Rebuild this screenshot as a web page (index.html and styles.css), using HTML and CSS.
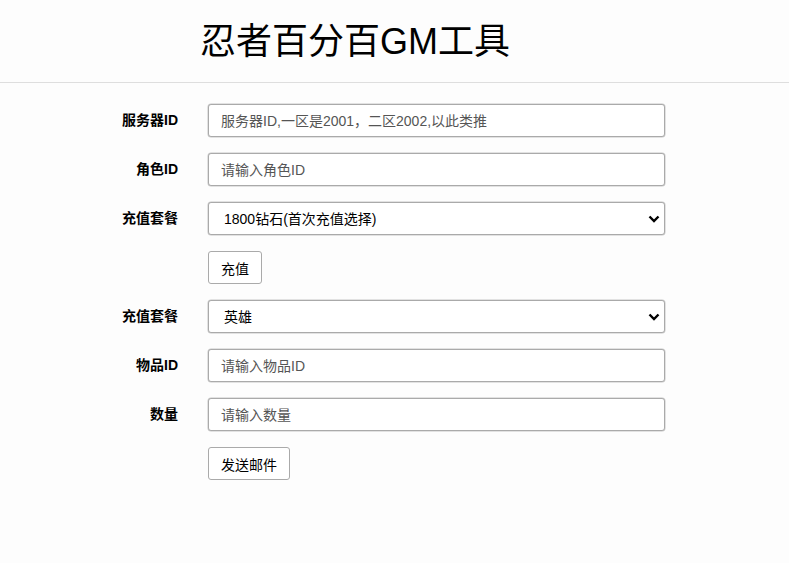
FILE: index.html
```html
<!DOCTYPE html>
<html lang="zh">
<head>
    <meta charset="utf-8" />
    <link rel="stylesheet" href="styles.css">
    <title>忍者百分百GM工具</title>
</head>
<body>
    <div class="header">
        <h1>忍者百分百GM工具</h1>
    </div>
    <div class="form">
        <label class="label" for="server">服务器ID</label>
        <input class="field" id="server" type="text" placeholder="服务器ID,一区是2001，二区2002,以此类推">

        <label class="label" for="role">角色ID</label>
        <input class="field" id="role" type="text" placeholder="请输入角色ID">

        <label class="label" for="pack">充值套餐</label>
        <select class="field select" id="pack">
            <option>1800钻石(首次充值选择)</option>
        </select>

        <span></span>
        <div><button class="btn">充值</button></div>

        <label class="label" for="pack2">充值套餐</label>
        <select class="field select" id="pack2">
            <option>英雄</option>
        </select>

        <label class="label" for="item">物品ID</label>
        <input class="field" id="item" type="text" placeholder="请输入物品ID">

        <label class="label" for="count">数量</label>
        <input class="field" id="count" type="text" placeholder="请输入数量">

        <span></span>
        <div><button class="btn">发送邮件</button></div>
    </div>
</body>
</html>
```

FILE: styles.css
```css
body {
    margin: 0;
    background: #fdfdfd;
    font-family: "Liberation Sans", "Noto Sans CJK SC", sans-serif;
    color: #000;
}

.header {
    height: 83px;
    border-bottom: 1px solid #dedede;
    padding-left: 200px;
    box-sizing: border-box;
}

    .header h1 {
        margin: 0;
        padding-top: 20px;
        font-size: 36px;
        font-weight: normal;
        line-height: 44px;
    }

.form {
    display: grid;
    grid-template-columns: 170px 457px;
    column-gap: 30px;
    row-gap: 16px;
    padding: 21px 0 0 8px;
}

.label {
    text-align: right;
    font-size: 14px;
    font-weight: bold;
    line-height: 33px;
}

.field {
    height: 33px;
    box-sizing: border-box;
    border: 1px solid #aaa;
    box-shadow: 0 0 0 0.5px #c8c8c8;
    border-radius: 3px;
    padding: 0 12px;
    font-family: "Liberation Sans", "Noto Sans CJK SC", sans-serif;
    font-size: 14px;
    background: #fff;
    color: #000;
    outline: none;
}

    .field::placeholder {
        color: #555;
    }

.select {
    -webkit-appearance: none;
    appearance: none;
    padding-left: 15px;
    background: #fff url("data:image/svg+xml;utf8,<svg xmlns='http://www.w3.org/2000/svg' width='12' height='8' viewBox='0 0 12 8'><path d='M1.5 1.5 L6 6 L10.5 1.5' fill='none' stroke='black' stroke-width='2.4'/></svg>") no-repeat right 4px center;
}

.btn {
    height: 33px;
    box-sizing: border-box;
    padding: 0 12px;
    border: 1px solid #aaa;
    border-radius: 3px;
    background: #fff;
    font-family: "Liberation Sans", "Noto Sans CJK SC", sans-serif;
    font-size: 14px;
    color: #000;
}
```
